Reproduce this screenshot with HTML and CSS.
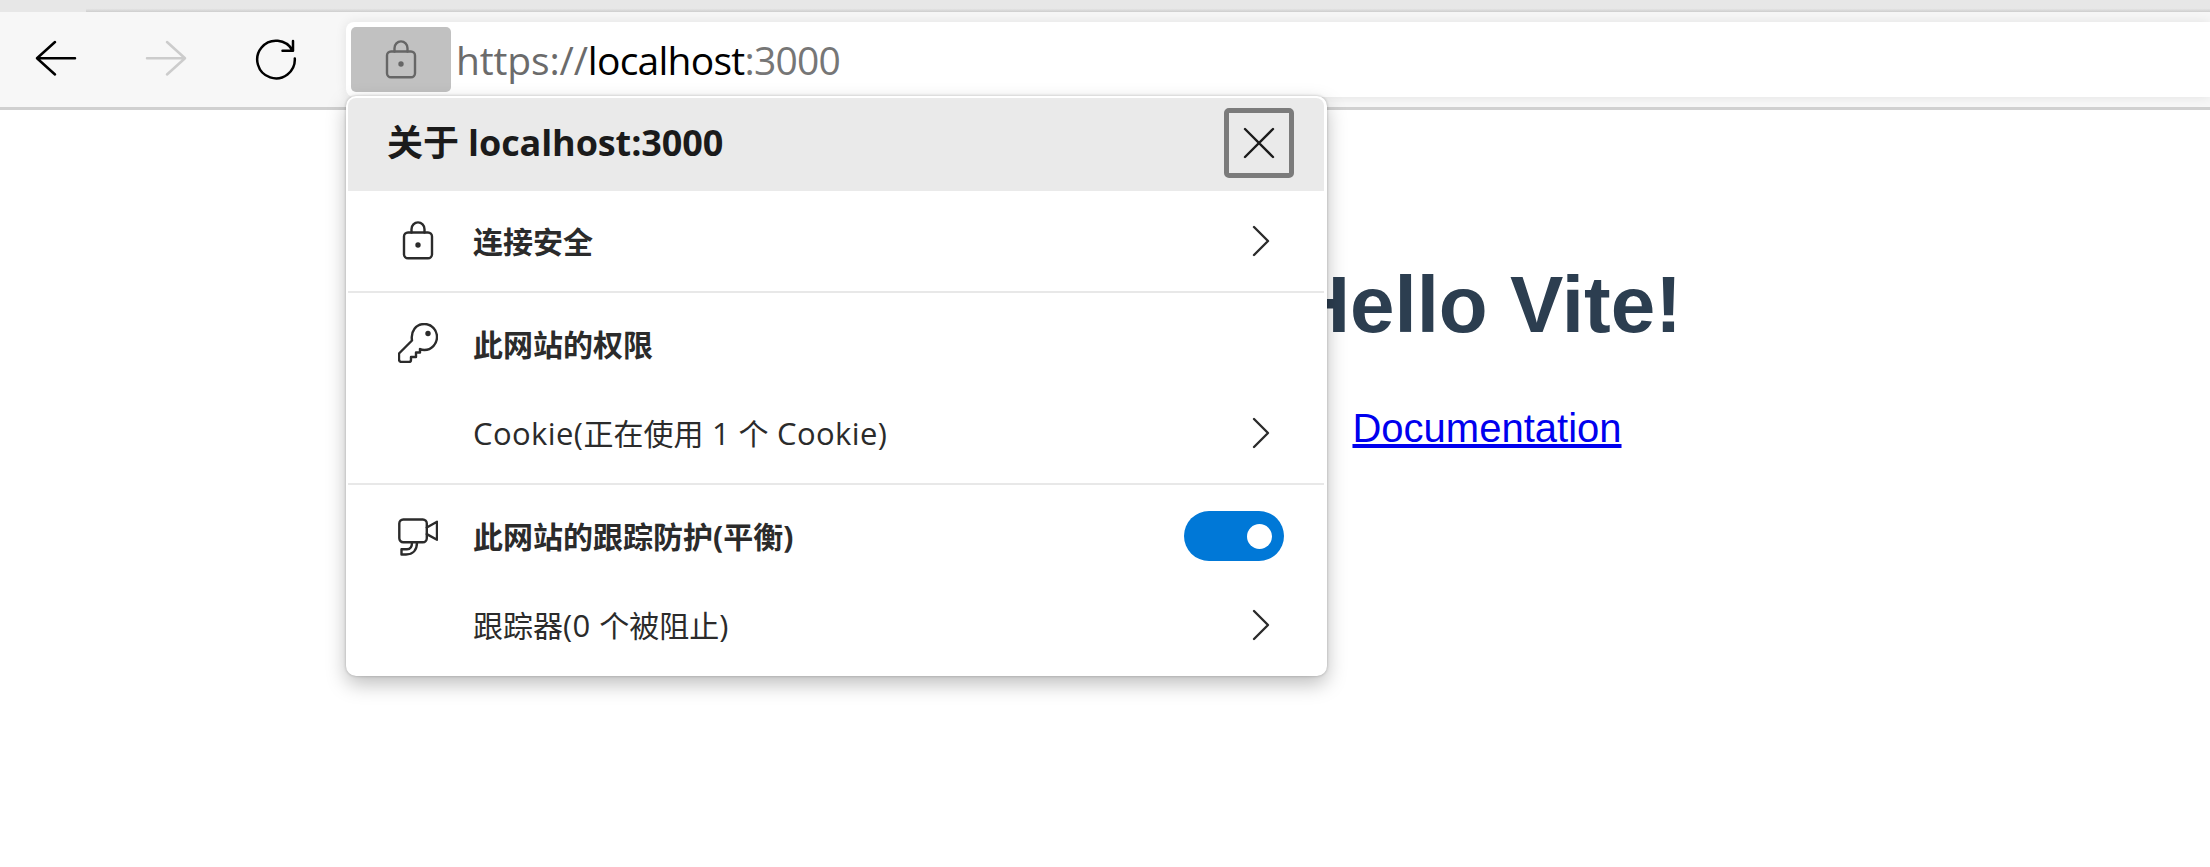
FILE: index.html
```html
<!DOCTYPE html>
<html lang="zh-CN">
<head>
<meta charset="utf-8">
<title>localhost:3000</title>
<link rel="stylesheet" href="styles.css">
</head>
<body>
<div class="browser">
  <div class="tabstrip"><div class="tabstrip-edge"></div></div>
  <header class="toolbar">
    <nav class="nav">
      <svg class="nav-icon" width="44" height="44" viewBox="0 0 44 44"><path d="M21 6 3 22.200 21 38.500M3 22.200h38"/></svg>
      <svg class="nav-icon disabled" width="44" height="44" viewBox="0 0 44 44"><path d="M23 6 41 22.200 23 38.500M41 22.200H3"/></svg>
      <svg class="nav-icon" width="44" height="44" viewBox="0 0 44 44"><path d="M40.800 22.500A18.800 18.800 0 1 1 38.500 14.500M39 5v9.800H28.500"/></svg>
    </nav>
    <div class="address">
      <div class="chip"><svg class="icon" width="40" height="40" viewBox="0 0 40 40"><rect x="6" y="11.500" width="28" height="25.800" rx="4"/><path d="M13.500 11.500V8.200a6.500 6.800 0 0 1 13 0v3.300"/><circle class="fill" cx="20" cy="24" r="2.700"/></svg></div>
      <div class="url"><span class="scheme">https://</span><span class="host">localhost</span><span class="port">:3000</span></div>
    </div>
  </header>
  <main class="page">
    <h1 class="title">Hello Vite!</h1>
    <a class="link" href="#">Documentation</a>
  </main>
  <section class="popup">
    <div class="popup-head">
      <h2 class="popup-title">关于 localhost:3000</h2>
      <button class="close" aria-label="关闭"><svg class="icon dark" width="32" height="32" viewBox="0 0 32 32"><path d="M2 2l28 28M30 2 2 30"/></svg></button>
    </div>
    <div class="group first">
      <div class="row">
        <svg class="icon lead" width="40" height="40" viewBox="0 0 40 40"><rect x="6" y="11.500" width="28" height="25.800" rx="4"/><path d="M13.500 11.500V8.200a6.500 6.800 0 0 1 13 0v3.300"/><circle class="fill" cx="20" cy="24" r="2.700"/></svg>
        <span class="label strong">连接安全</span>
        <svg class="icon chevron" width="18" height="32" viewBox="0 0 18 32"><path d="M2 2l14 14L2 30"/></svg>
      </div>
    </div>
    <div class="group second">
      <div class="row">
        <svg class="icon lead key" width="40" height="40" viewBox="0 0 40 40"><path d="M1 30.500 14 17.500C12.500 8 18 1 26.500 1 33.500 1 39 7 39 14S33.500 27 26.500 27c-1.500 0-3 0-4.500-1v3.500h-4V34h-5v3c0 1.500-1 2-2 2H4c-2 0-3-1-3-3z"/><circle class="fill" cx="30" cy="10.500" r="2.700"/></svg>
        <span class="label strong">此网站的权限</span>
      </div>
      <div class="row sub">
        <span class="label"><span class="latin">Cookie(</span>正在使用<span class="latin"> 1 </span>个<span class="latin"> Cookie)</span></span>
        <svg class="icon chevron" width="18" height="32" viewBox="0 0 18 32"><path d="M2 2l14 14L2 30"/></svg>
      </div>
    </div>
    <div class="group third">
      <div class="row">
        <svg class="icon lead" width="40" height="40" viewBox="0 0 40 40"><rect x="1.300" y="3.500" width="27.500" height="22.700" rx="4"/><path d="M28.800 11.500 39 5.800v18l-10.200-5.700M14 26.500c0 4-1 6.700-5 6.700H3.500v5.300H8c7 0 11-4.500 11-12"/></svg>
        <span class="label strong">此网站的跟踪防护(平衡)</span>
        <span class="toggle"><span class="knob"></span></span>
      </div>
      <div class="row sub">
        <span class="label">跟踪器<span class="latin">(0 </span>个被阻止<span class="latin">)</span></span>
        <svg class="icon chevron" width="18" height="32" viewBox="0 0 18 32"><path d="M2 2l14 14L2 30"/></svg>
      </div>
    </div>
  </section>
</div>
</body>
</html>
```
FILE: styles.css
```css
* { box-sizing: border-box; }
body { margin: 0; background: #fff; font-family: "Open Sans", "Noto Sans CJK SC", sans-serif; }
.browser { position: relative; width: 2210px; height: 867px; overflow: hidden; display: flex; flex-direction: column; }
.tabstrip { height: 12px; background: #e7e7e7; flex: none; }
.tabstrip-edge { margin-left: 86px; height: 12px; background: linear-gradient(#e7e7e7 70%, #cecece); }
.toolbar { flex: none; height: 98px; background: #f7f7f7; border-bottom: 3px solid #d0d0d0; display: flex; padding-top: 10px; }
.nav { width: 346px; flex: none; display: flex; gap: 66px; padding: 14px 0 0 34px; }
.nav-icon { flex: none; fill: none; stroke: #000; stroke-width: 2.500; stroke-linecap: round; stroke-linejoin: round; }
.disabled { stroke: #ccc; }
.address { flex: 1; height: 75px; background: #fff; border-radius: 8px 0 0 8px; box-shadow: 0 0 12px rgba(0,0,0,.09); display: flex; align-items: center; padding-left: 5px; }
.chip { width: 100px; height: 65px; background: #c1c1c1; border-radius: 5px; display: flex; align-items: center; justify-content: center; }
.icon { flex: none; fill: none; stroke: #2b2b2b; stroke-width: 2.400; stroke-linecap: round; stroke-linejoin: round; }
.icon .fill { fill: #2b2b2b; stroke: none; }
.chip .icon { stroke: #666; }
.chip .icon .fill { fill: #666; }
.icon.dark { stroke: #1b1b1b; }
.url { margin-left: 5px; font-size: 39px; line-height: 60px; white-space: pre; color: #767676; }
.scheme { color: #6b6b6b; letter-spacing: -.150px; }
.host { color: #000; letter-spacing: -.750px; }
.port { letter-spacing: -.800px; }
.page { width: 340px; margin-left: 1317px; padding-top: 149px; display: flex; flex-direction: column; align-items: center; font-family: "Liberation Sans", sans-serif; }
.title { margin: 0; font-size: 80px; line-height: 92px; color: #2c3e50; white-space: nowrap; }
.link { font-size: 40px; line-height: 46px; margin-top: 54px; color: #00e; }
.popup { position: absolute; left: 346px; top: 96px; width: 981px; height: 580px; background: #fff; border-radius: 10px; padding: 2px 3px 0 2px; box-shadow: 0 0 3px rgba(0,0,0,.25), 0 8px 20px rgba(0,0,0,.26); }
.popup-head { height: 93px; background: #eaeaea; border-radius: 8px 8px 0 0; display: flex; justify-content: space-between; padding: 10px 30px 0 39px; }
.popup-title { margin: 0; font-size: 36px; letter-spacing: -.100px; line-height: 70px; color: #1b1b1b; white-space: pre; }
.close { width: 70px; height: 70px; border: 5px solid #7b7b7b; border-radius: 5px; background: transparent; padding: 0; display: flex; align-items: center; justify-content: center; }
.group { border-bottom: 2px solid #e8e8e8; }
.first { height: 102px; padding-top: 20px; }
.second { height: 192px; padding-top: 21px; }
.third { border: 0; padding-top: 21px; }
.row { height: 60px; display: flex; align-items: center; padding: 0 54px 0 50px; }
.sub { margin-top: 29px; padding-left: 125px; }
.lead { margin-right: 35px; }
.key { margin-bottom: 2px; }
.label { flex: 1; font-size: 30px; line-height: 60px; padding-top: 1px; color: #2b2b2b; white-space: nowrap; }
.latin { font-size: 31px; letter-spacing: .420px; line-height: 1; white-space: pre; }
.strong { font-weight: 700; }
.toggle { width: 100px; height: 50px; border-radius: 25px; background: #0078d7; margin-right: -14px; display: flex; align-items: center; justify-content: flex-end; padding-right: 12px; }
.knob { width: 25px; height: 25px; border-radius: 50%; background: #fff; }
```
